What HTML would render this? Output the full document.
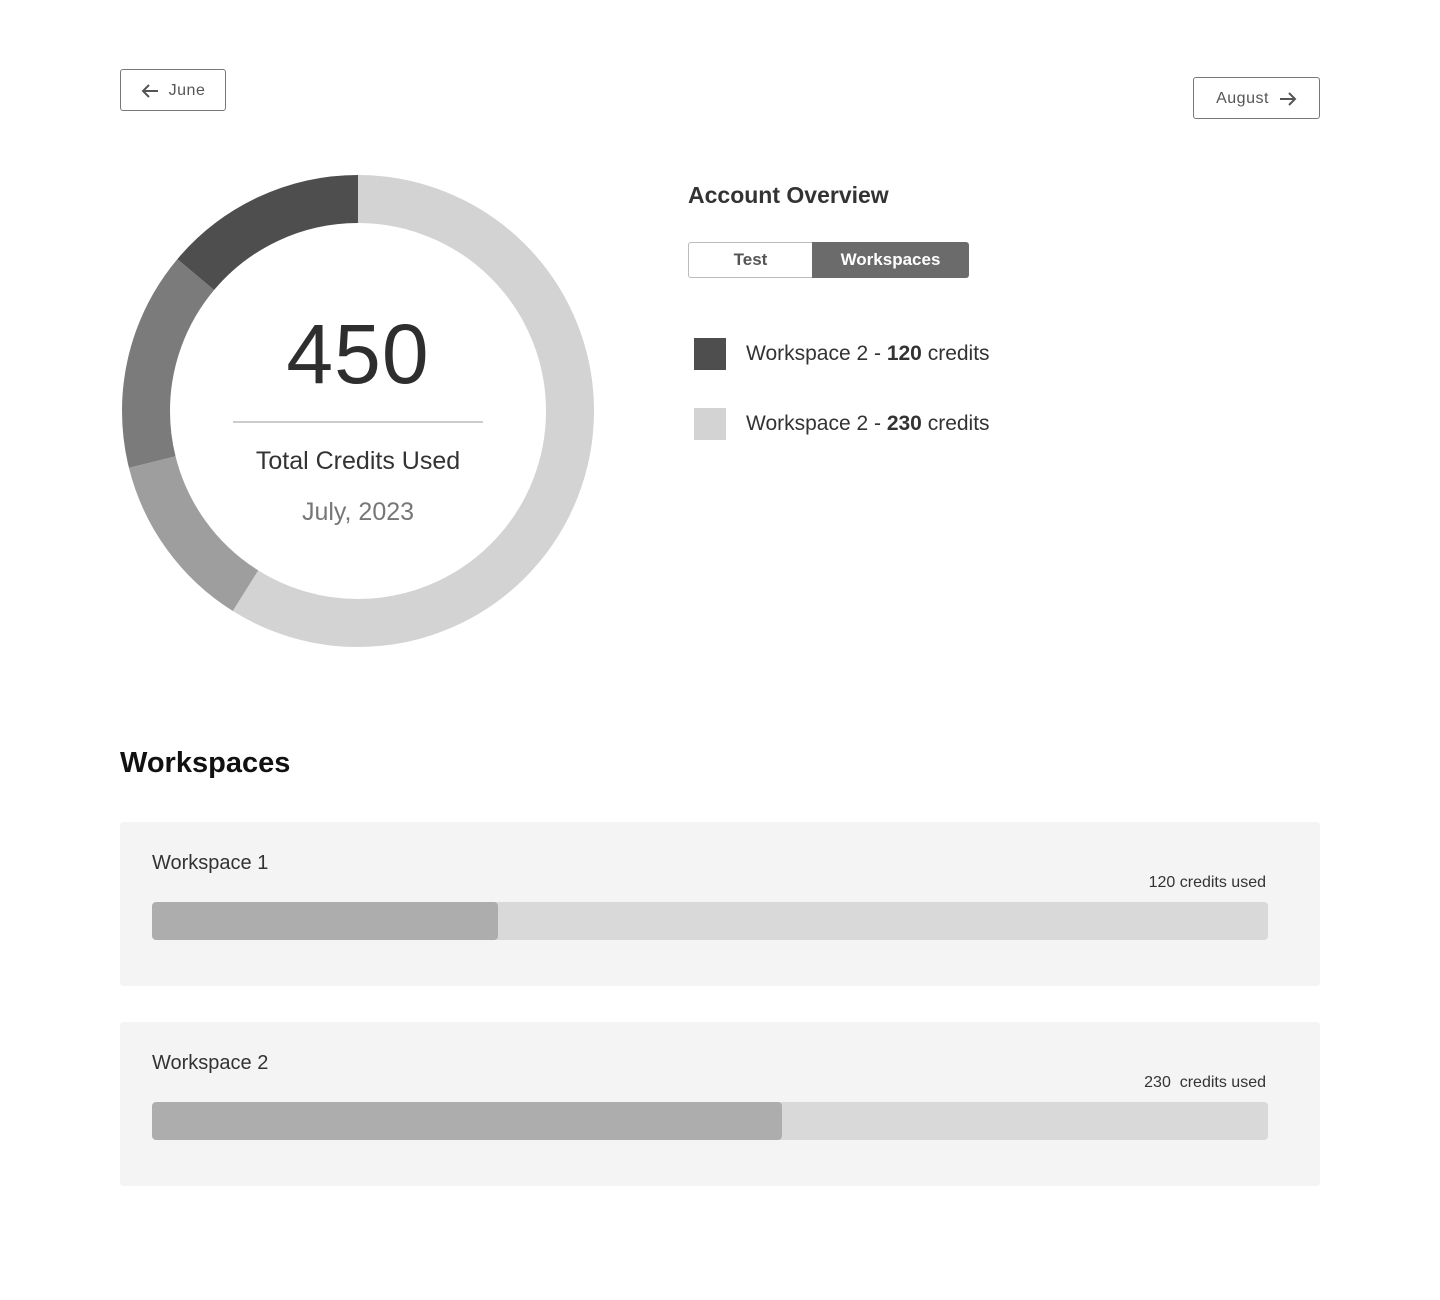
<!DOCTYPE html>
<html><head><meta charset="utf-8"><style>
body{margin:0;width:1440px;height:1300px;background:#fff;font-family:"Liberation Sans",sans-serif;position:relative;color:#333}
.btn{position:absolute;border:1px solid #777;border-radius:3px;box-sizing:border-box;font-size:16px;color:#555;display:flex;align-items:center;justify-content:center;gap:10px;letter-spacing:.5px;padding-top:2px}
.abs{position:absolute}
.card{position:absolute;left:120px;width:1200px;height:164px;background:#f4f4f4;border-radius:3px}
.card .t{position:absolute;left:32px;top:30px;font-size:20px;color:#333}
.card .u{position:absolute;right:54px;top:52px;font-size:16px;color:#333}
.card .bar{position:absolute;left:32px;top:80px;width:1116px;height:38px;background:#d9d9d9;border-radius:4px;overflow:hidden}
.card .fill{height:100%;background:#adadad;border-radius:4px}
</style></head><body>
<div class="btn" style="left:120px;top:69px;width:106px;height:42px"><svg width="18" height="14" viewBox="0 0 18 14"><path d="M17 7H2M8 1L2 7l6 6" fill="none" stroke="#555" stroke-width="2"/></svg>June</div>
<div class="btn" style="left:1193px;top:77px;width:127px;height:42px">August<svg width="18" height="14" viewBox="0 0 18 14"><path d="M1 7h15M10 1l6 6-6 6" fill="none" stroke="#555" stroke-width="2"/></svg></div>

<svg class="abs" style="left:0;top:0" width="720" height="700">
<g transform="rotate(-90 358 411)" fill="none" stroke-width="48">
<circle cx="358" cy="411" r="212" stroke="#d3d3d3" stroke-dasharray="784.4 1400" stroke-dashoffset="0"/>
<circle cx="358" cy="411" r="212" stroke="#9e9e9e" stroke-dasharray="162.8 1400" stroke-dashoffset="-784.4"/>
<circle cx="358" cy="411" r="212" stroke="#7b7b7b" stroke-dasharray="199.8 1400" stroke-dashoffset="-947.2"/>
<circle cx="358" cy="411" r="212" stroke="#4e4e4e" stroke-dasharray="185 1400" stroke-dashoffset="-1147"/>
</g>
<line x1="233" y1="422" x2="483" y2="422" stroke="#999" stroke-width="1"/>
</svg>
<div class="abs" style="left:158px;width:400px;top:306px;text-align:center;font-size:84px;color:#2e2e2e;letter-spacing:1px">450</div>
<div class="abs" style="left:158px;width:400px;top:447px;text-align:center;font-size:25px;color:#333">Total Credits Used</div>
<div class="abs" style="left:158px;width:400px;top:498px;text-align:center;font-size:25px;color:#777">July, 2023</div>

<div class="abs" style="left:688px;top:182px;font-size:23px;font-weight:bold;color:#333">Account Overview</div>
<div class="abs" style="left:688px;top:242px;width:124px;height:36px;border:1px solid #bbb;border-right:none;border-radius:3px 0 0 3px;box-sizing:border-box;text-align:center;line-height:34px;font-size:17px;font-weight:bold;color:#555">Test</div>
<div class="abs" style="left:812px;top:242px;width:157px;height:36px;background:#6b6b6b;border-radius:0 3px 3px 0;text-align:center;line-height:36px;font-size:17px;font-weight:bold;color:#fff">Workspaces</div>

<div class="abs" style="left:694px;top:338px;width:32px;height:32px;background:#4e4e4e"></div>
<div class="abs" style="left:746px;top:342px;font-size:21px;color:#333">Workspace 2 - <b>120</b> credits</div>
<div class="abs" style="left:694px;top:408px;width:32px;height:32px;background:#d3d3d3"></div>
<div class="abs" style="left:746px;top:412px;font-size:21px;color:#333">Workspace 2 - <b>230</b> credits</div>

<div class="abs" style="left:120px;top:747px;font-size:29px;font-weight:bold;color:#111">Workspaces</div>

<div class="card" style="top:822px"><div class="t">Workspace 1</div><div class="u">120 credits used</div><div class="bar"><div class="fill" style="width:346px"></div></div></div>
<div class="card" style="top:1022px"><div class="t">Workspace 2</div><div class="u">230&nbsp; credits used</div><div class="bar"><div class="fill" style="width:630px"></div></div></div>
</body></html>
